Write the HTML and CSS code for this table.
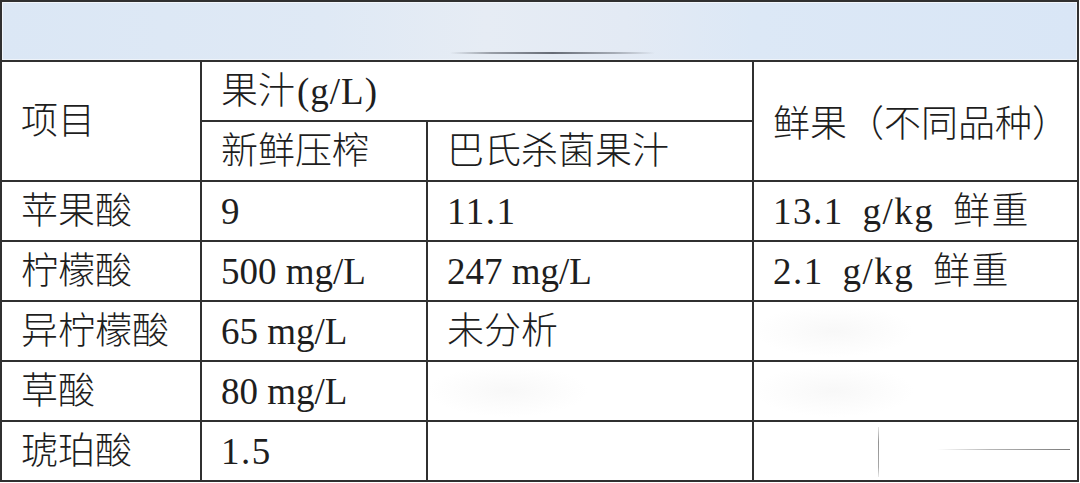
FILE: index.html
```html
<!DOCTYPE html>
<html lang="zh-CN">
<head>
<meta charset="utf-8">
<title>果汁有机酸</title>
<link rel="stylesheet" href="styles.css">
</head>
<body>
<div class="sheet">
  <div class="band"><span class="band-smudge"></span></div>

  <div class="cell span-rows-2">项目</div>
  <div class="cell span-cols-2">果汁<span class="unit">(g/L)</span></div>
  <div class="cell span-rows-2 fresh">鲜果（不同品种）</div>
  <div class="cell">新鲜压榨</div>
  <div class="cell">巴氏杀菌果汁</div>

  <div class="cell">苹果酸</div>
  <div class="cell">9</div>
  <div class="cell dotted">11.1</div>
  <div class="cell wide">13.1 g/kg 鲜重</div>

  <div class="cell">柠檬酸</div>
  <div class="cell">500 mg/L</div>
  <div class="cell">247 mg/L</div>
  <div class="cell wide">2.1 g/kg 鲜重</div>

  <div class="cell">异柠檬酸</div>
  <div class="cell">65 mg/L</div>
  <div class="cell">未分析</div>
  <div class="cell blur-left"></div>

  <div class="cell">草酸</div>
  <div class="cell">80 mg/L</div>
  <div class="cell blur-left"></div>
  <div class="cell blur-left"></div>

  <div class="cell">琥珀酸</div>
  <div class="cell dotted">1.5</div>
  <div class="cell"></div>
  <div class="cell marks"><span class="mark-v"></span><span class="mark-h"></span></div>
</div>
</body>
</html>
```

FILE: styles.css
```css
html, body {
  margin: 0;
  padding: 0;
  background: #ffffff;
}

.sheet {
  display: grid;
  grid-template-columns: 198px 224px 324px 323px;
  grid-template-rows: repeat(8, 58px);
  gap: 2px;
  padding: 2px;
  width: max-content;
  background: #303030;
  font-family: "Liberation Serif", "Noto Sans CJK SC", serif;
  font-size: 37px;
  font-weight: 300;
  color: #1e1e1e;
}

.band {
  grid-column: 1 / -1;
  position: relative;
  background: linear-gradient(90deg, #dbe7f5 0%, #dfe9f5 30%, #e6ecf4 45%, #e3eaf4 58%, #dce8f6 70%, #d9e6f6 100%);
  box-shadow: inset 1px 1px 0 #f2f6fb, inset -1px -1px 0 #eef3f9;
}

.band-smudge {
  position: absolute;
  left: 448px;
  top: 50px;
  width: 205px;
  height: 2px;
  background: linear-gradient(90deg, rgba(90,95,105,0) 0%, rgba(90,95,105,0.55) 20%, rgba(70,75,85,0.8) 50%, rgba(90,95,105,0.45) 80%, rgba(90,95,105,0) 100%);
  border-radius: 2px;
  filter: blur(0.4px);
}

.cell {
  background: #ffffff;
  display: flex;
  align-items: center;
  padding-left: 19px;
  line-height: 1;
  white-space: pre;
}

.unit {
  margin-left: 2px;
  letter-spacing: 1px;
}

.wide {
  letter-spacing: 1.5px;
  word-spacing: 8px;
}

.dotted {
  letter-spacing: 1.5px;
}

.span-rows-2 {
  grid-row: span 2;
}

.span-cols-2 {
  grid-column: span 2;
}

.fresh {
  padding-top: 6px;
}

.blur-left {
  background: radial-gradient(ellipse 80px 26px at 80px 29px, rgba(232,232,232,0.3), rgba(255,255,255,0) 100%), #ffffff;
}

.marks {
  position: relative;
}

.mark-v {
  position: absolute;
  left: 124px;
  top: 5px;
  width: 1px;
  height: 50px;
  background: linear-gradient(180deg, rgba(120,120,120,0.2), rgba(110,110,110,0.75) 30%, rgba(110,110,110,0.6) 80%, rgba(120,120,120,0.15));
}

.mark-h {
  position: absolute;
  left: 183px;
  top: 27px;
  width: 133px;
  height: 1px;
  background: linear-gradient(90deg, rgba(120,120,120,0), rgba(110,110,110,0.5) 40%, rgba(90,90,90,0.8) 100%);
}
```
